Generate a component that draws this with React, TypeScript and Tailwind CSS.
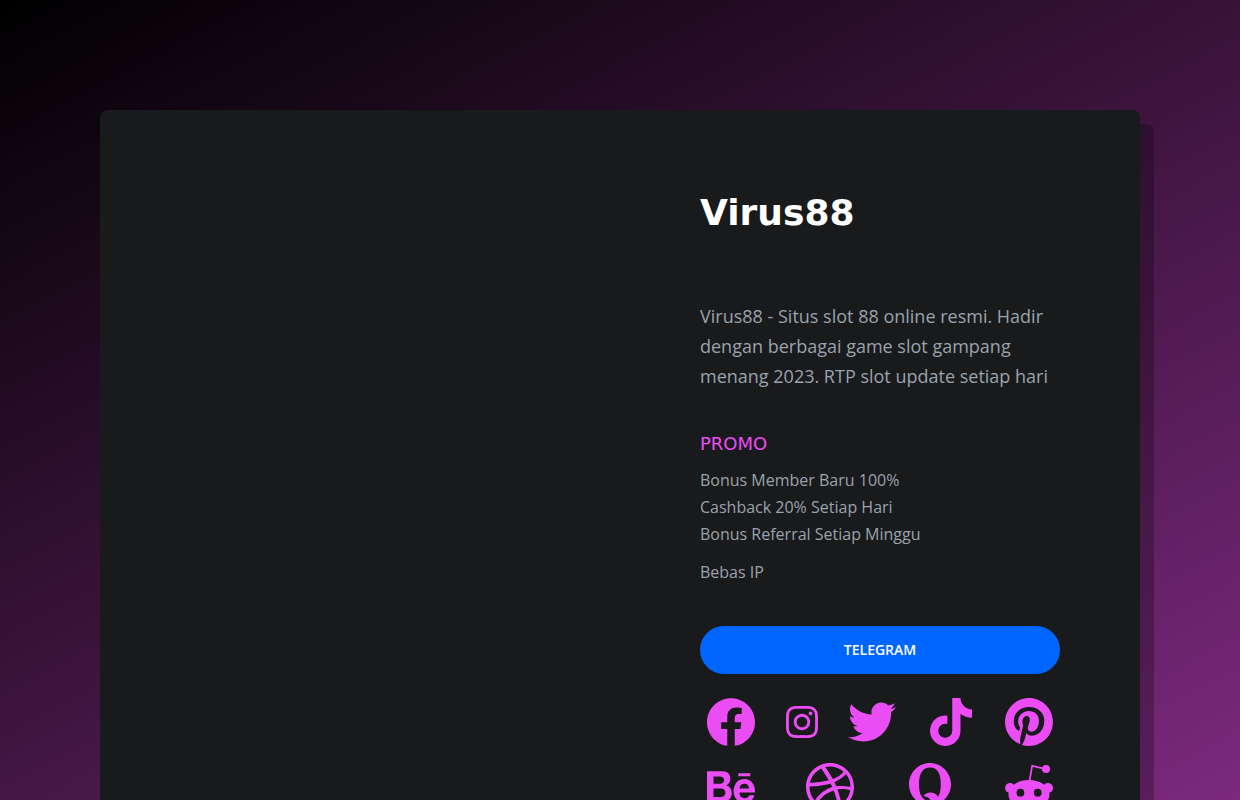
import type { ComponentType } from 'react'
import { FaInstagram, FaTiktok, FaTwitter } from 'react-icons/fa'
import { SiBehance, SiDribbble, SiPinterest } from 'react-icons/si'

type IconProps = { className?: string }

type SocialLink = {
  name: string
  icon: ComponentType<IconProps>
  size: string
}

function FacebookIcon(props: IconProps) {
  return (
    <svg viewBox="0 0 24 24" fill="currentColor" className={props.className}>
      <path d="M24 12.073c0-6.627-5.373-12-12-12s-12 5.373-12 12c0 5.99 4.388 10.954 10.125 11.854v-8.385H7.078v-3.47h3.047V9.43c0-3.007 1.792-4.669 4.533-4.669 1.312 0 2.686.235 2.686.235v2.953H15.83c-1.491 0-1.956.925-1.956 1.874v2.25h3.328l-.532 3.47h-2.796v8.385C19.612 23.027 24 18.062 24 12.073z" />
    </svg>
  )
}

function QuoraIcon(props: IconProps) {
  return (
    <svg viewBox="0 0 48 48" fill="currentColor" className={props.className}>
      <path
        fillRule="evenodd"
        d="M24 0C12.500 0 3 9.500 3 21.300S12.500 42.500 24 42.500 45 33 45 21.300 35.500 0 24 0zM24 4.500C31.500 4.500 34.800 10.500 34.800 21.300S31.500 38 24 38 13 32 13 21.300 16.500 4.500 24 4.500z"
      />
      <path d="M17.500 33C19 30.700 21.500 29.400 24.500 29.400 30 29.400 32.300 33.500 34.500 37.200 36.500 40.700 38 42.500 40.700 42.500 43 42.500 43.800 40.700 44 39.300H46.500C46.700 43.500 44.500 48 37.800 48 31.500 48 28.700 44.300 26 39.500 23.800 35.500 22 33.500 17.500 33z" />
    </svg>
  )
}

function RedditIcon(props: IconProps) {
  return (
    <svg viewBox="0 0 48 48" fill="currentColor" className={props.className}>
      <path
        d="M24.500 18L27.200 2.800 40 5.800"
        fill="none"
        stroke="currentColor"
        strokeWidth="1.700"
      />
      <circle cx="41" cy="6" r="4" />
      <circle cx="5" cy="25" r="5" />
      <circle cx="43" cy="25" r="5" />
      <path
        fillRule="evenodd"
        d="M24 17C12.400 17 3.500 23.400 3.500 31.500S12.400 46 24 46 44.500 39.600 44.500 31.500 35.600 17 24 17zM15.400 25.800a3.900 3.900 0 1 1 0 7.800 3.900 3.900 0 1 1 0-7.800zM32.700 25.800a3.900 3.900 0 1 1 0 7.800 3.900 3.900 0 1 1 0-7.800zM15 37.300C20 41.500 28 41.500 33 37.300L34.300 38.700C28.500 44 19.500 44 13.700 38.700z"
      />
    </svg>
  )
}

const socialLinks: SocialLink[] = [
  { name: 'Facebook', icon: FacebookIcon, size: 'w-12 h-12' },
  { name: 'Instagram', icon: FaInstagram, size: 'w-8 h-12' },
  { name: 'Twitter', icon: FaTwitter, size: 'w-12 h-12' },
  { name: 'TikTok', icon: FaTiktok, size: 'w-12 h-12' },
  { name: 'Pinterest', icon: SiPinterest, size: 'w-12 h-12' },
  { name: 'Behance', icon: SiBehance, size: 'w-12 h-12' },
  { name: 'Dribbble', icon: SiDribbble, size: 'w-12 h-12' },
  { name: 'Quora', icon: QuoraIcon, size: 'w-12 h-12' },
  { name: 'Reddit', icon: RedditIcon, size: 'w-12 h-12' },
]

const promos = [
  'Bonus Member Baru 100%',
  'Cashback 20% Setiap Hari',
  'Bonus Referral Setiap Minggu',
]

function SocialLinks() {
  return (
    <ul className="mt-[17px] flex flex-wrap justify-between gap-x-2 gap-y-[3px]">
      {socialLinks.map(({ name, icon: Icon, size }) => (
        <li key={name}>
          <a href="#" aria-label={name} className="block p-[7px] text-[#eb4df4]">
            <Icon className={size} />
          </a>
        </li>
      ))}
    </ul>
  )
}

export default function App() {
  return (
    <div className="min-h-screen bg-[linear-gradient(152deg,#000000,#7c297e)] bg-fixed px-6 py-[110px] font-['Open_Sans',sans-serif] text-[#9aa3ae]">
      <main className="mx-auto grid max-w-[1040px] grid-cols-1 rounded-lg bg-[#181a1b] shadow-[14px_14px_0_rgba(0,0,0,0.25)] md:grid-cols-2">
        <section className="p-10 md:col-start-2 md:p-20">
          <h1 className="font-['DejaVu_Sans',sans-serif] text-4xl font-bold leading-[45px] text-white">
            Virus88
          </h1>
          <p className="mt-[66px] text-lg leading-[30px]">
            Virus88 - Situs slot 88 online resmi. Hadir dengan berbagai game
            slot gampang menang 2023. RTP slot update setiap hari
          </p>

          <h2 className="mt-[41px] font-['DejaVu_Sans',sans-serif] text-lg leading-[24px] text-[#eb4df4]">
            PROMO
          </h2>
          <ul className="mt-[11px] leading-[27px]">
            {promos.map((promo) => (
              <li key={promo}>{promo}</li>
            ))}
          </ul>
          <p className="mt-[11px] leading-[27px]">Bebas IP</p>

          <button
            type="button"
            className="mt-10 h-12 w-full rounded-full bg-[#0066ff] text-sm font-semibold text-white"
          >
            TELEGRAM
          </button>
          <SocialLinks />
        </section>
      </main>
    </div>
  )
}
